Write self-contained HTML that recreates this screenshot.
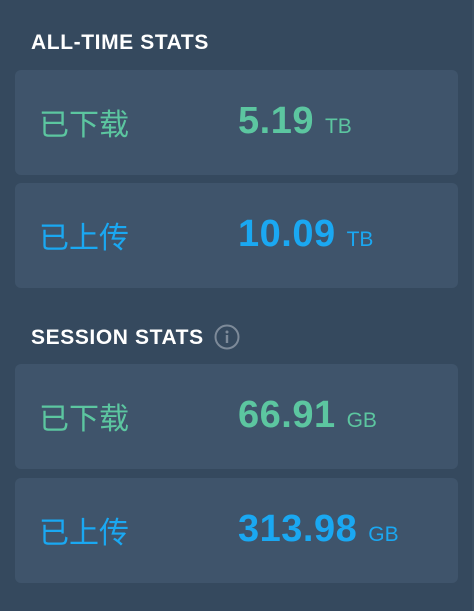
<!DOCTYPE html>
<html><head><meta charset="utf-8"><style>
body{margin:0;width:474px;height:611px;background:#35495e;font-family:"Liberation Sans","Noto Sans CJK SC",sans-serif;position:relative;overflow:hidden}
.h{position:absolute;left:31px;color:#fff;font-weight:bold;font-size:21px;letter-spacing:0.6px}
.c{position:absolute;left:15px;width:443px;height:105px;background:#3f546b;border-radius:6px}
.l{position:absolute;left:24px;top:39px;font-size:30px;line-height:34px}
.v{position:absolute;left:223px;top:31px;font-size:38px;font-weight:bold;line-height:40px;white-space:nowrap;letter-spacing:0.5px}
.v span{font-size:21px;font-weight:normal;margin-left:11px;letter-spacing:0}
.g{color:#5cc6a0}.b{color:#1aa8f2}
.r{position:absolute;right:0;top:0;width:2px;height:611px;background:#3a4f63}
</style></head><body>
<div class="r"></div>
<div class="h" style="top:31px">ALL-TIME STATS</div>
<div class="c" style="top:70px"><div class="l g">已下载</div><div class="v g">5.19<span>TB</span></div></div>
<div class="c" style="top:183px"><div class="l b">已上传</div><div class="v b">10.09<span>TB</span></div></div>
<div class="h" style="top:326px">SESSION STATS</div>
<svg style="position:absolute;left:214px;top:324px" width="26" height="26" viewBox="0 0 26 26"><circle cx="13" cy="13" r="11.5" fill="none" stroke="#7d8a99" stroke-width="2"/><circle cx="13" cy="8" r="1.5" fill="#7d8a99"/><rect x="11.8" y="11" width="2.4" height="8" fill="#7d8a99"/></svg>
<div class="c" style="top:364px"><div class="l g">已下载</div><div class="v g">66.91<span>GB</span></div></div>
<div class="c" style="top:478px"><div class="l b">已上传</div><div class="v b">313.98<span>GB</span></div></div>
</body></html>
